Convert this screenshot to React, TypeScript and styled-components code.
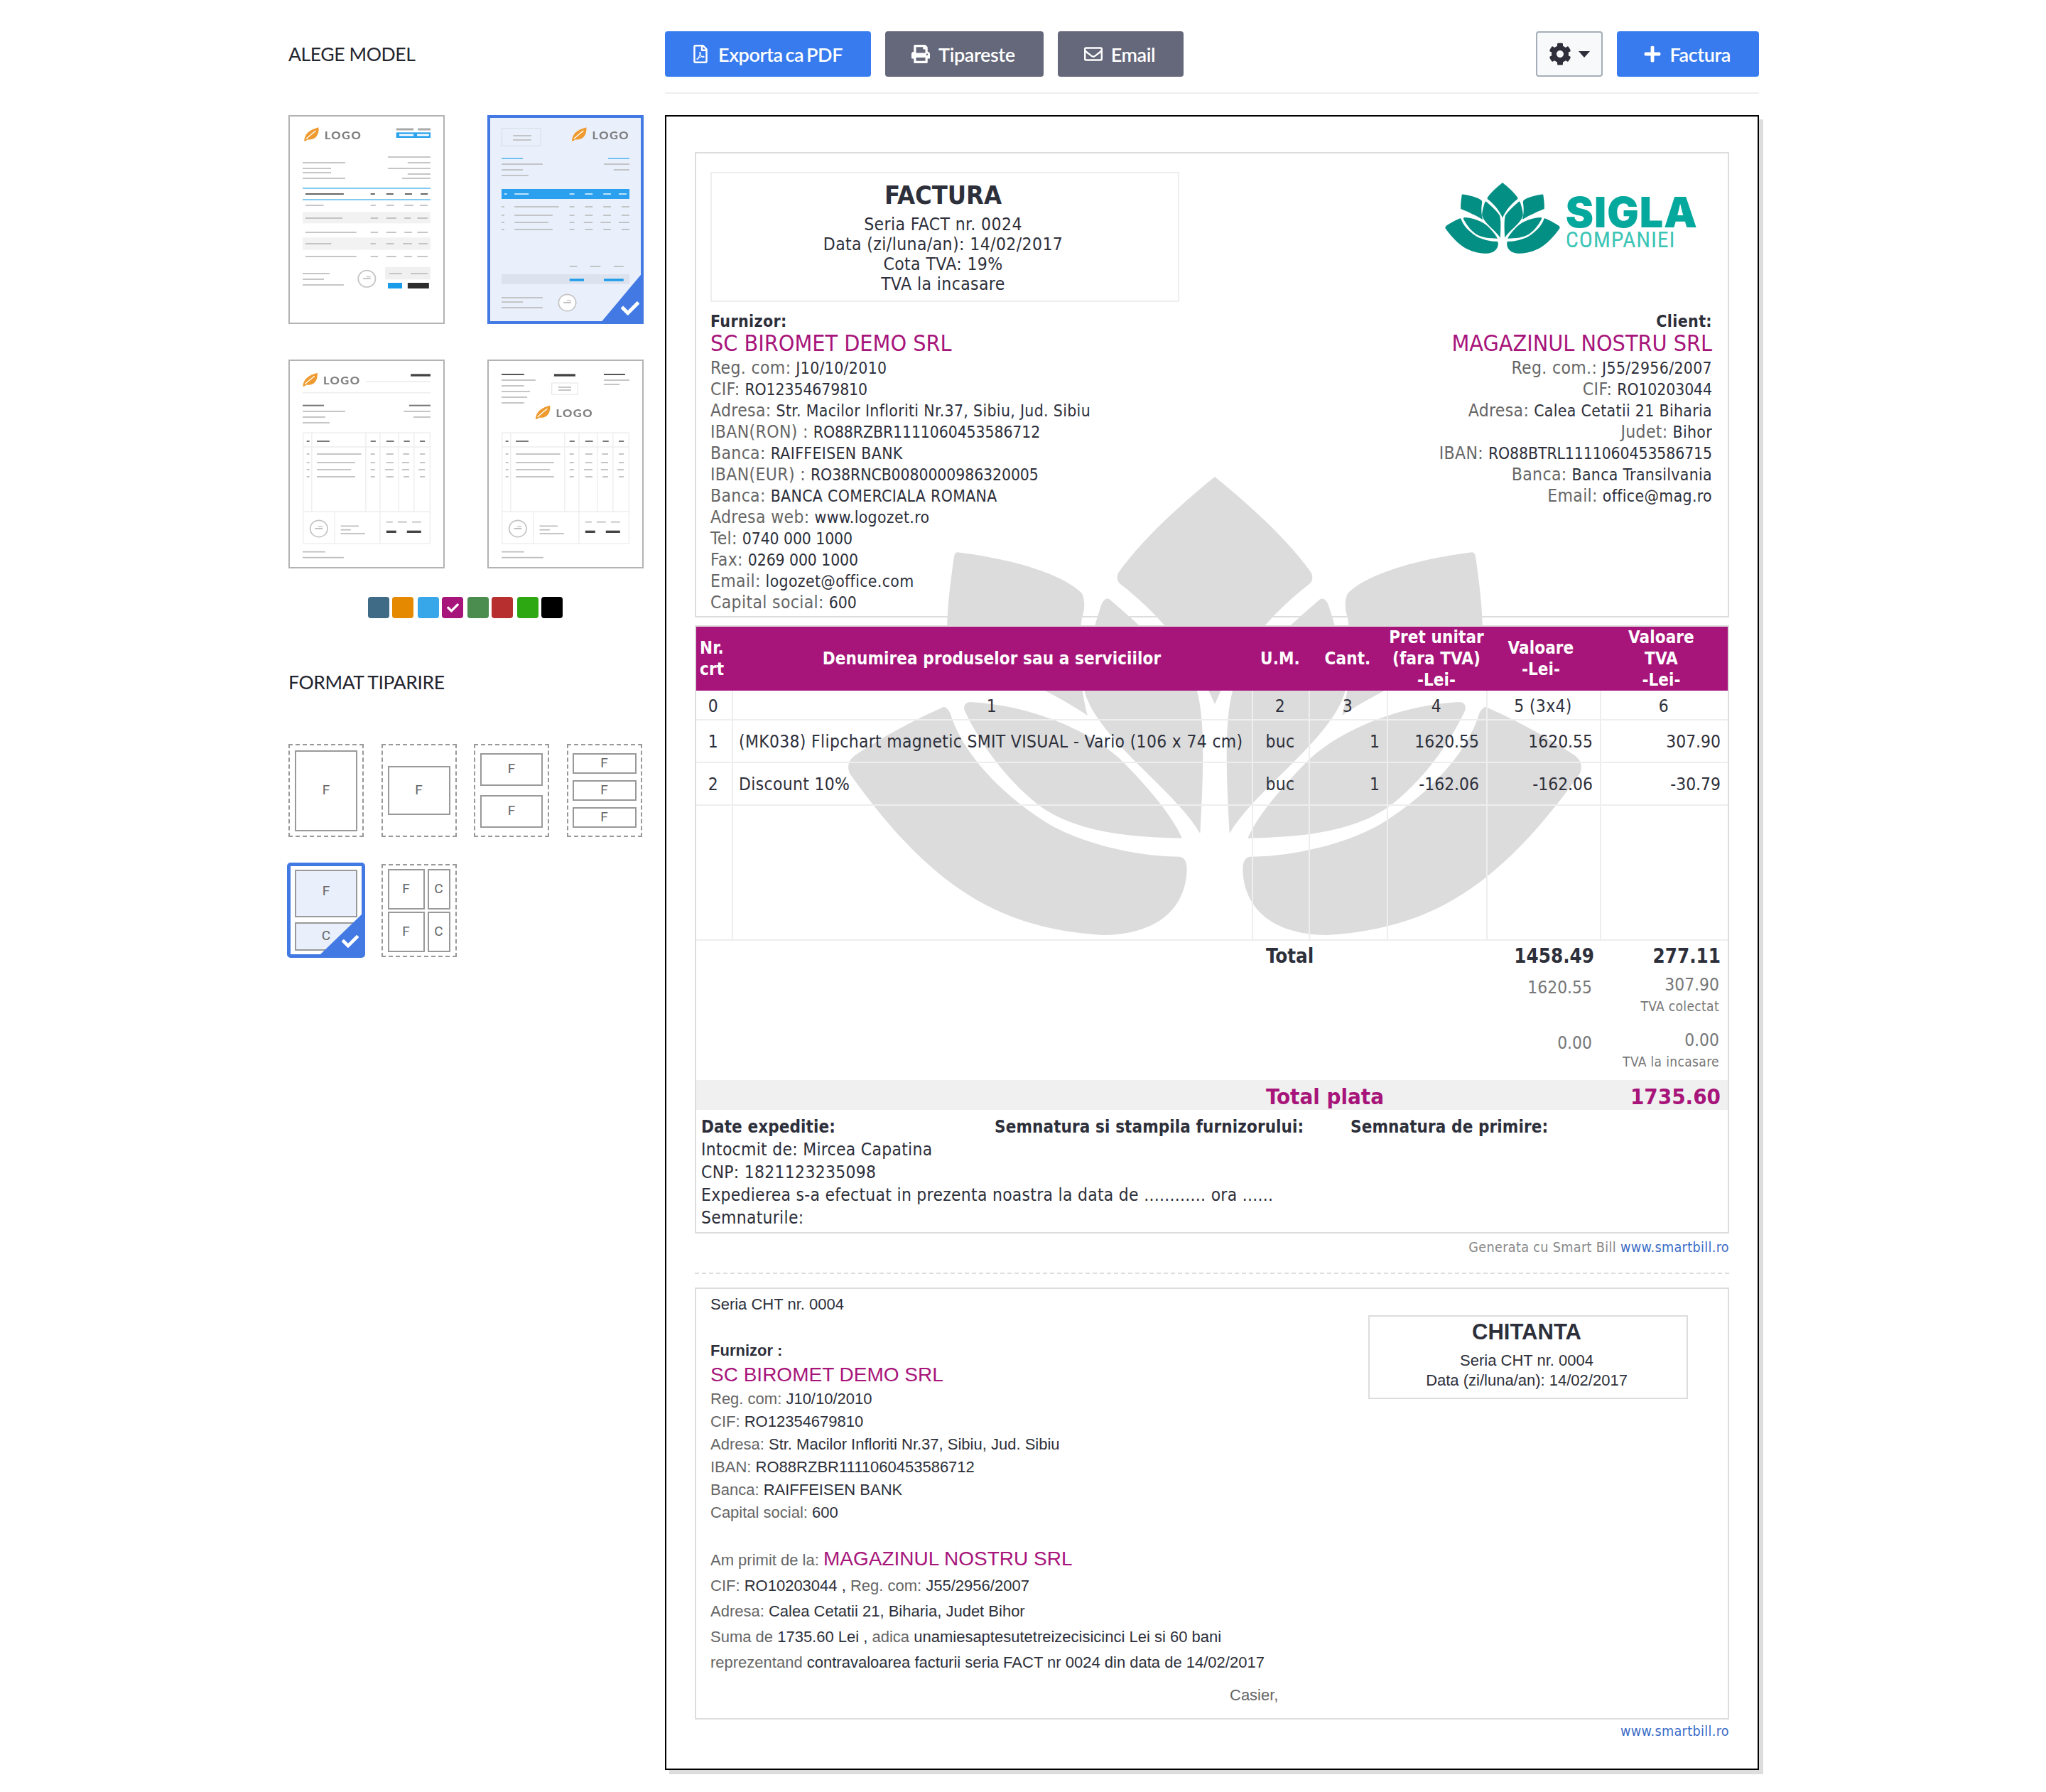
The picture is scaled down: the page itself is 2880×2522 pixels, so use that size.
import React from 'react';
import styled, { createGlobalStyle } from 'styled-components';
import { FaCheck, FaCog, FaPlus, FaPrint, FaRegEnvelope, FaRegFilePdf } from 'react-icons/fa';

const PURPLE = '#a7147a';
const INK = '#2d2f3a';

const GlobalStyle = createGlobalStyle`
  html, body { margin: 0; padding: 0; background: #fff; }
  * { box-sizing: border-box; }
`;

const Page = styled.div`
  width: 2880px;
  min-height: 2522px;
  padding: 44px 0 0 406px;
  display: flex;
  font-family: 'Lato', sans-serif;
  color: ${INK};
`;

const Sidebar = styled.aside`
  width: 530px;
  flex: none;
`;

const SideTitle = styled.h2<{ $gap?: number }>`
  margin: ${({ $gap }) => $gap ?? 0}px 0 0;
  height: 64px;
  line-height: 64px;
  font-size: 26.5px;
  font-weight: 400;
  letter-spacing: -0.4px;
  color: #23252f;
`;

const ThumbGrid = styled.div`
  margin-top: 54px;
  display: grid;
  grid-template-columns: 220px 220px;
  grid-auto-rows: 294px;
  column-gap: 60px;
  row-gap: 50px;
`;

const ThumbFrame = styled.div<{ $selected?: boolean }>`
  position: relative;
  overflow: hidden;
  background: ${({ $selected }) => ($selected ? '#e9f0fb' : '#fff')};
  &::after {
    content: '';
    position: absolute;
    inset: 0;
    border: ${({ $selected }) => ($selected ? '4px solid #4279e3' : '2px solid #b3b3b3')};
  }
`;

const ThumbSvg = styled.svg`
  display: block;
  width: 100%;
  height: 100%;
  filter: blur(0.45px);
`;

const ThumbCorner = styled.div`
  position: absolute;
  right: 0;
  bottom: 0;
  width: 62px;
  height: 74px;
  background: #4279e3;
  clip-path: polygon(100% 0, 100% 100%, 0 100%);
  svg {
    position: absolute;
    right: 6px;
    bottom: 9px;
    width: 26px;
    height: 26px;
    color: #fff;
  }
`;

const Swatches = styled.div`
  margin: 40px 0 0 112px;
  display: flex;
`;

const Swatch = styled.div<{ $color: string }>`
  width: 30px;
  height: 30px;
  margin-right: 4px;
  border-radius: 4px;
  background: ${({ $color }) => $color};
  display: flex;
  align-items: center;
  justify-content: center;
  color: #fff;
  &:nth-child(even) {
    margin-right: 6px;
  }
  svg {
    width: 17px;
    height: 17px;
  }
`;

const FormatGrid = styled.div`
  margin-top: 55px;
  display: grid;
  grid-template-columns: repeat(4, 106px);
  grid-auto-rows: 131px;
  column-gap: 24.5px;
  row-gap: 38px;
`;

const FormatTile = styled.div<{ $gap?: number; $selected?: boolean }>`
  position: relative;
  display: flex;
  flex-direction: column;
  align-items: center;
  justify-content: center;
  gap: ${({ $gap }) => $gap ?? 0}px;
  overflow: hidden;
  border: 2px dashed #999;
  ${({ $selected }) =>
    $selected &&
    `
    width: 110px;
    height: 134px;
    margin: -2px 0 0 -2px;
    border: 5px solid #4279e3;
    border-radius: 5px;
  `}
`;

const Sheet = styled.div<{ $w?: number; $h: number; $tint?: boolean; $lift?: number }>`
  width: ${({ $w }) => $w ?? 88}px;
  height: ${({ $h }) => $h}px;
  padding-bottom: ${({ $lift }) => $lift ?? 3}px;
  border: 2px solid #999;
  display: flex;
  align-items: center;
  justify-content: center;
  font-family: 'Roboto', sans-serif;
  font-size: 19px;
  color: #666;
  background: ${({ $tint }) => ($tint ? '#e9f0fb' : '#fff')};
`;

const SheetGrid = styled.div`
  display: grid;
  grid-template-columns: 52px 32px;
  grid-auto-rows: 57px;
  column-gap: 4px;
  row-gap: 3px;
`;

const TileCorner = styled.div`
  position: absolute;
  right: 0;
  bottom: 0;
  width: 58px;
  height: 56px;
  background: #4279e3;
  clip-path: polygon(100% 0, 100% 100%, 0 100%);
  svg {
    position: absolute;
    right: 4px;
    bottom: 6px;
    width: 24px;
    height: 24px;
    color: #fff;
  }
`;

const Main = styled.main`
  width: 1540px;
  flex: none;
`;

const Toolbar = styled.div`
  display: flex;
  gap: 20px;
  padding-bottom: 22px;
  border-bottom: 2px solid #eee;
`;

const ToolButton = styled.button<{ $variant: 'blue' | 'gray' }>`
  height: 64px;
  padding: 0 40px 0 37px;
  display: flex;
  align-items: center;
  gap: 12px;
  border: none;
  border-radius: 4px;
  background: ${({ $variant }) => ($variant === 'blue' ? '#377bee' : '#65677a')};
  color: #fff;
  font-family: 'Lato', sans-serif;
  font-size: 27px;
  font-weight: 600;
  letter-spacing: -0.4px;
  word-spacing: -2.5px;
  svg {
    flex: none;
    width: auto;
    height: 26px;
  }
`;

const SettingsButton = styled.button`
  margin-left: auto;
  width: 94px;
  height: 64px;
  display: flex;
  align-items: center;
  justify-content: center;
  gap: 10px;
  border: 2px solid #a6aeb8;
  border-radius: 4px;
  background: #f8f9fa;
  color: ${INK};
  svg {
    width: 32px;
    height: 32px;
  }
`;

const Caret = styled.span`
  width: 0;
  height: 0;
  border-left: 8px solid transparent;
  border-right: 8px solid transparent;
  border-top: 9px solid ${INK};
`;

const Paper = styled.div`
  position: relative;
  margin-top: 30px;
  padding: 50px 40px 38px;
  border: 2px solid #000;
  background: #fff;
  box-shadow: 6px 6px 0 #ddd;
  font-family: 'DejaVu Sans Condensed', 'DejaVu Sans', sans-serif;
  font-stretch: condensed;
  font-size: 24.4px;
  letter-spacing: 0.35px;
  color: ${INK};
`;

const Watermark = styled.svg`
  position: absolute;
  left: 255px;
  top: 507px;
  width: 1034px;
  height: 646px;
`;

const Layer = styled.div`
  position: relative;
`;

const PartiesBox = styled.section`
  border: 2px solid #ddd;
  height: 655px;
  padding: 26px 22px 0 20px;
  font-size: 23px;
`;

const HeadRow = styled.div`
  display: flex;
  justify-content: space-between;
`;

const TitleBox = styled.div`
  width: 660px;
  height: 183px;
  padding: 11px 5px 0 0;
  border: 2px solid #eee;
  text-align: center;
  font-size: 24.5px;
  letter-spacing: 0.4px;
  line-height: 28px;
`;

const TitleHeading = styled.div`
  height: 47px;
  line-height: 40px;
  font-size: 36px;
  font-weight: 700;
  letter-spacing: 0;
`;

const Brand = styled.div`
  margin: 15px 20px 0 0;
  display: flex;
  gap: 8px;
`;

const BrandLotus = styled.svg`
  width: 162px;
  height: 100px;
`;

const BrandName = styled.div`
  margin-top: 17px;
  height: 50px;
  line-height: 50px;
  font-family: 'Inter', sans-serif;
  font-size: 59px;
  font-weight: 900;
  letter-spacing: 1px;
  color: #04a89c;
`;

const BrandSub = styled.div`
  line-height: 26px;
  font-family: 'Roboto', sans-serif;
  font-size: 32px;
  letter-spacing: 0.8px;
  color: #3dc5b5;
`;

const Parties = styled.div`
  margin-top: 12px;
  display: flex;
  justify-content: space-between;
`;

const Party = styled.div<{ $right?: boolean }>`
  text-align: ${({ $right }) => ($right ? 'right' : 'left')};
`;

const PartyLabel = styled.div`
  line-height: 30px;
  font-weight: 700;
`;

const CompanyName = styled.div`
  height: 36px;
  line-height: 32px;
  font-size: 32px;
  letter-spacing: 0;
  color: ${PURPLE};
`;

const InfoLine = styled.div`
  line-height: 30px;
  white-space: nowrap;
`;

const Muted = styled.span`
  color: #666;
`;

const InfoKey = styled(Muted)`
  font-size: 24.5px;
`;

const InfoValue = styled.span<{ $tight: boolean }>`
  font-size: 22.8px;
  letter-spacing: ${({ $tight }) => ($tight ? '-0.1px' : '0.35px')};
`;

const InvoiceBody = styled.section`
  margin-top: 11px;
  border: 2px solid #ddd;
  height: 856px;
`;

const ItemsTable = styled.table`
  width: 1452px;
  table-layout: fixed;
  border-collapse: separate;
  border-spacing: 0;
  tbody tr:first-child td {
    padding-top: 4px;
  }
`;

const Th = styled.th<{ $left?: boolean; $nudge?: number }>`
  height: 90px;
  padding: ${({ $left, $nudge }) => ($left ? '0 5px' : `0 ${$nudge ?? 4}px 0 0`)};
  background: ${PURPLE};
  color: #fff;
  font-size: 24px;
  font-weight: 700;
  letter-spacing: 0.1px;
  line-height: 30px;
  text-align: ${({ $left }) => ($left ? 'left' : 'center')};
`;

const Td = styled.td<{ $align?: 'left' | 'right' | 'center'; $h: number }>`
  height: ${({ $h }) => $h}px;
  padding: 2px 10px 0 8px;
  border-right: 2px solid #eee;
  border-bottom: 2px solid #eee;
  text-align: ${({ $align }) => $align ?? 'center'};
  letter-spacing: ${({ $align }) => ($align === 'right' ? '0' : 'inherit')};
  white-space: nowrap;
  line-height: 30px;
  &:last-child {
    border-right: none;
  }
`;

const SummaryRow = styled.div<{ $h: number; $band?: boolean }>`
  height: ${({ $h }) => $h}px;
  display: grid;
  grid-template-columns: 784px 330px 160px 178px;
  background: ${({ $band }) => ($band ? '#f0f0f0' : 'transparent')};
`;

const SummaryLabel = styled.div<{ $big?: boolean }>`
  grid-column: 2;
  padding-left: 18px;
  font-weight: 700;
  font-size: ${({ $big }) => ($big ? 31 : 27.5)}px;
  line-height: ${({ $big }) => ($big ? 46 : 42)}px;
  letter-spacing: 0;
  color: ${({ $big }) => ($big ? PURPLE : INK)};
`;

const SummaryValue = styled.div<{ $big?: boolean }>`
  padding-right: 10px;
  text-align: right;
  font-weight: 700;
  font-size: ${({ $big }) => ($big ? 31 : 27.5)}px;
  line-height: ${({ $big }) => ($big ? 46 : 42)}px;
  letter-spacing: 0;
  color: ${({ $big }) => ($big ? PURPLE : INK)};
`;

const TaxBase = styled.div`
  grid-column: 3;
  padding: 8px 13px 0 0;
  text-align: right;
  line-height: 32px;
  letter-spacing: 0;
  color: #777;
`;

const TaxValue = styled.div`
  padding: 4px 12px 0 0;
  text-align: right;
  line-height: 32px;
  letter-spacing: 0;
  color: #777;
`;

const TaxNote = styled.div`
  line-height: 28px;
  font-size: 19px;
  letter-spacing: 0.35px;
  color: #777;
`;

const Shipping = styled.div`
  padding: 8px 7px 0;
  line-height: 32px;
  letter-spacing: 0.3px;
`;

const ShippingHeads = styled.div`
  display: grid;
  grid-template-columns: 413px 501px auto;
  font-size: 24px;
  font-weight: 700;
  letter-spacing: 0.1px;
`;

const SmallNote = styled.div<{ $top: number }>`
  margin-top: ${({ $top }) => $top}px;
  text-align: right;
  font-size: 19.6px;
  line-height: 28px;
  color: #888;
  a {
    color: #3b6dc7;
    text-decoration: none;
  }
`;

const CutLine = styled.div`
  margin-top: 21px;
  border-top: 2px dashed #ddd;
`;

const ReceiptBox = styled.section`
  position: relative;
  margin-top: 19px;
  height: 608px;
  padding: 6px 56px 0 20px;
  border: 2px solid #ddd;
  font-family: 'Liberation Sans', Arial, sans-serif;
  font-size: 22px;
  letter-spacing: 0;
`;

const ReceiptHead = styled.div`
  display: flex;
  justify-content: space-between;
`;

const ReceiptLine = styled.div<{ $h?: number }>`
  line-height: ${({ $h }) => $h ?? 32}px;
  white-space: nowrap;
`;

const ReceiptBold = styled.div`
  margin-top: 33px;
  line-height: 32px;
  font-weight: 700;
`;

const ReceiptName = styled.div`
  height: 36px;
  line-height: 35px;
  font-size: 28px;
  color: ${PURPLE};
`;

const ReceiptInline = styled.span`
  font-size: 28px;
  color: ${PURPLE};
`;

const ReceiptTitleBox = styled.div`
  width: 450px;
  height: 118px;
  margin-top: 31px;
  padding: 2px 4px 0 0;
  border: 2px solid #ddd;
  text-align: center;
  line-height: 28px;
`;

const ReceiptHeading = styled.div`
  height: 46px;
  line-height: 40px;
  font-size: 31px;
  font-weight: 700;
`;

const ReceiptFrom = styled.div`
  margin-top: 30px;
  height: 39px;
  line-height: 38px;
  white-space: nowrap;
`;

const Cashier = styled.div`
  margin: 12px 0 0 731px;
  line-height: 32px;
  color: #666;
`;

type Bar = [number, number, number];

const Bars = ({ items, color = '#bbb', h = 5 }: { items: Bar[]; color?: string; h?: number }) => (
  <>
    {items.map(([a, b, y], i) => (
      <rect key={i} x={a} y={y - h / 2} width={b - a} height={h} fill={color} />
    ))}
  </>
);

const row = (y: number, ...xs: number[]): Bar[] => {
  const out: Bar[] = [];
  for (let i = 0; i < xs.length; i += 2) out.push([xs[i], xs[i + 1], y]);
  return out;
};

const LogoMark = ({ x, y }: { x: number; y: number }) => (
  <g transform={`translate(${x} ${y})`}>
    <path d="M0 57 C2 28 20 10 57 0 C60 30 45 56 14 51 L4 58 Z" fill="#ef9a2e" />
    <path d="M8 48 C20 36 32 26 46 14" stroke="#fff" strokeWidth="4" fill="none" />
    <text x="80" y="49" fontFamily="Lato, sans-serif" fontWeight="900" fontSize="46" fill="#808080" textLength={143}>
      LOGO
    </text>
  </g>
);

const Stamp = ({ cx, cy }: { cx: number; cy: number }) => (
  <g>
    <ellipse cx={cx} cy={cy} rx="34" ry="35" fill="#fff" stroke="#c4c4c4" strokeWidth="5" />
    <rect x={cx - 15} y={cy - 3} width="30" height="5" fill="#bbb" />
    <rect x={cx - 2} y={cy - 11} width="17" height="5" fill="#ccc" />
  </g>
);

// the table drawn on the two bordered models; the second one just shifts it right
const GridTable = () => (
  <g>
    <g fill="none" stroke="#eee" strokeWidth="4">
      <rect x="131" y="387" width="500" height="468" />
      <path d="M131 447H631M131 720H631M165 387V720M378 387V720M434 387V855M507 387V720M568 387V720M255 720V855" />
    </g>
    <Bars h={6} color="#777" items={row(423, 145, 156, 185, 235, 397, 417, 459, 489, 528, 551, 591, 611)} />
    <Bars
      items={[
        ...row(477, 145, 156, 185, 360, 397, 414, 459, 487, 525, 549, 591, 611),
        ...row(513, 145, 156, 185, 336, 397, 414, 459, 487, 521, 549, 591, 611),
        ...row(543, 145, 156, 185, 320, 397, 414, 454, 487, 521, 549, 586, 611),
        ...row(573, 145, 156, 185, 336, 397, 414, 459, 487, 527, 549, 591, 611),
        ...row(764, 459, 484, 504, 540, 560, 596),
        ...row(781, 279, 350),
        ...row(797, 279, 319),
        ...row(813, 279, 375),
      ]}
    />
    <Bars h={10} color="#444" items={row(805, 459, 498, 540, 596)} />
    <Stamp cx={193} cy={792} />
  </g>
);

const ModelOne = () => (
  <ThumbSvg viewBox="73 426 616 882" preserveAspectRatio="none">
    <LogoMark x={135} y={478} />
    <Bars h={9} color="#aaa" items={row(486, 498, 566, 583, 633)} />
    <rect x="498" y="499" width="135" height="23" fill="#2ba3ee" />
    <Bars h={8} color="#fff" items={row(510, 510, 566, 580, 627)} />
    <rect x="129" y="835" width="504" height="48" fill="#f2f2f2" />
    <rect x="129" y="943" width="504" height="52" fill="#f2f2f2" />
    <rect x="454" y="1068" width="179" height="52" fill="#f0f0f0" />
    <Bars
      items={[
        ...row(603, 465, 633),
        ...row(627, 129, 297, 543, 633),
        ...row(651, 129, 241, 465, 633),
        ...row(669, 129, 241),
        ...row(675, 543, 633),
        ...row(693, 129, 297, 521, 633),
        ...row(807, 140, 212, 397, 417, 459, 489, 530, 566, 591, 622),
        ...row(861, 140, 286, 397, 426, 459, 498, 530, 555, 581, 622),
        ...row(921, 140, 341, 397, 426, 459, 498, 530, 560, 581, 622),
        ...row(969, 140, 242, 397, 417, 459, 489, 524, 560, 586, 622),
        ...row(1023, 140, 341, 397, 426, 459, 498, 530, 560, 581, 622),
        ...row(1095, 129, 235, 470, 520, 555, 622),
        ...row(1119, 129, 213),
        ...row(1143, 129, 291),
      ]}
    />
    <Bars color="#6bbff0" items={[...row(735, 129, 633), ...row(783, 129, 633)]} />
    <Bars h={6} color="#666" items={row(759, 140, 291, 397, 414, 459, 487, 532, 560, 594, 622)} />
    <Stamp cx={382} cy={1117} />
    <rect x="465" y="1134" width="56" height="24" fill="#1a9cea" />
    <rect x="543" y="1134" width="84" height="24" fill="#2e2e2e" />
  </ThumbSvg>
);

const ModelTwo = () => (
  <ThumbSvg viewBox="857 426 616 882" preserveAspectRatio="none">
    <rect x="914" y="482" width="154" height="74" fill="none" stroke="#d9dee8" strokeWidth="3" />
    <LogoMark x={1190} y={478} />
    <Bars color="#5bb8ee" items={row(609, 913, 997, 1333, 1417)} />
    <rect x="913" y="738" width="504" height="42" fill="#2ba0ee" />
    <Bars color="#bfe3fa" h={6} items={row(759, 924, 934, 964, 1020, 1181, 1200, 1242, 1272, 1314, 1344, 1375, 1406)} />
    <rect x="913" y="1098" width="504" height="42" fill="#dde3ee" />
    <Bars h={10} color="#1a9cea" items={row(1122, 1181, 1238, 1316, 1394)} />
    <Bars
      items={[
        ...row(513, 958, 1030),
        ...row(531, 958, 1030),
        ...row(633, 913, 1075, 1316, 1417),
        ...row(657, 913, 997, 1355, 1417),
        ...row(681, 913, 1019),
        ...row(813, 913, 924, 964, 1139, 1181, 1200, 1242, 1272, 1314, 1344, 1386, 1417),
        ...row(849, 913, 924, 964, 1114, 1181, 1200, 1242, 1272, 1314, 1344, 1386, 1417),
        ...row(879, 913, 924, 964, 1098, 1181, 1200, 1237, 1272, 1303, 1344, 1375, 1417),
        ...row(909, 913, 924, 964, 1114, 1181, 1200, 1242, 1272, 1314, 1344, 1386, 1417),
        ...row(1065, 1181, 1211, 1262, 1303, 1355, 1394),
        ...row(1197, 913, 1075),
        ...row(1215, 913, 997),
        ...row(1239, 913, 1075),
      ]}
    />
    <Stamp cx={1172} cy={1218} />
  </ThumbSvg>
);

const ModelThree = () => (
  <ThumbSvg viewBox="73 78 616 882" preserveAspectRatio="none">
    <LogoMark x={130} y={134} />
    <Bars h={10} color="#444" items={row(144, 555, 633)} />
    <Bars color="#eee" items={[...row(171, 378, 633), ...row(218, 129, 633)]} />
    <Bars h={6} color="#777" items={row(272, 129, 213, 549, 633)} />
    <Bars
      items={[
        ...row(297, 129, 297, 527, 633),
        ...row(321, 129, 218, 566, 633),
        ...row(345, 129, 235),
        ...row(890, 129, 218),
        ...row(914, 129, 291),
      ]}
    />
    <GridTable />
  </ThumbSvg>
);

const ModelFour = () => (
  <ThumbSvg viewBox="857 78 616 882" preserveAspectRatio="none">
    <Bars h={6} color="#555" items={row(141, 913, 1002, 1316, 1400)} />
    <Bars h={10} color="#444" items={row(144, 1120, 1204)} />
    <rect x="1111" y="177" width="102" height="48" fill="none" stroke="#e4e4e4" strokeWidth="3" />
    <Bars
      items={[
        ...row(165, 913, 1047, 1316, 1417),
        ...row(189, 913, 1002),
        ...row(183, 1316, 1378),
        ...row(195, 1137, 1187),
        ...row(207, 1137, 1187),
        ...row(213, 913, 1025),
        ...row(237, 913, 1014),
        ...row(261, 913, 1002),
        ...row(890, 913, 1002),
        ...row(914, 913, 1078),
      ]}
    />
    <LogoMark x={1047} y={272} />
    <g transform="translate(784 0)">
      <GridTable />
    </g>
  </ThumbSvg>
);

// lotus used for the logo and for the big watermark, drawn as one half and mirrored
const LotusHalf = () => (
  <>
    <path d="M0 0 C-50 40 -105 90 -138 136 Q-142 146 -135 152 C-85 190 -30 250 0 322 Z" />
    <path d="M-151 173 C-125 195 -60 250 -26 301 C-15 340 -15 400 -21 505 C-60 440 -170 370 -187 301 C-190 280 -175 220 -165 190 Q-160 170 -151 173 Z" />
    <path d="M-368 107 C-300 115 -220 135 -190 165 Q-183 180 -190 200 C-197 250 -192 300 -182 338 C-220 312 -300 272 -382 240 C-385 200 -378 150 -373 115 Q-372 107 -368 107 Z" />
    <path d="M-350 319 C-280 322 -190 350 -135 400 C-100 435 -60 480 -47 512 C-120 510 -190 505 -245 470 C-300 430 -340 370 -358 330 Q-360 320 -350 319 Z" />
    <path d="M-392 328 Q-385 322 -378 335 C-365 380 -320 440 -240 490 C-190 520 -110 538 -50 538 Q-40 540 -40 555 C-40 600 -70 648 -160 649 C-300 640 -400 590 -522 420 Q-528 405 -515 395 C-470 365 -420 340 -392 328 Z" />
  </>
);

const Lotus = () => (
  <>
    <LotusHalf />
    <g transform="scale(-1 1)">
      <LotusHalf />
    </g>
  </>
);

const supplierLines: [string, string][] = [
  ['Reg. com:', 'J10/10/2010'],
  ['CIF:', 'RO12354679810'],
  ['Adresa:', 'Str. Macilor Infloriti Nr.37, Sibiu, Jud. Sibiu'],
  ['IBAN(RON) :', 'RO88RZBR1111060453586712'],
  ['Banca:', 'RAIFFEISEN BANK'],
  ['IBAN(EUR) :', 'RO38RNCB0080000986320005'],
  ['Banca:', 'BANCA COMERCIALA ROMANA'],
  ['Adresa web:', 'www.logozet.ro'],
  ['Tel:', '0740 000 1000'],
  ['Fax:', '0269 000 1000'],
  ['Email:', 'logozet@office.com'],
  ['Capital social:', '600'],
];

const clientLines: [string, string][] = [
  ['Reg. com.:', 'J55/2956/2007'],
  ['CIF:', 'RO10203044'],
  ['Adresa:', 'Calea Cetatii 21 Biharia'],
  ['Judet:', 'Bihor'],
  ['IBAN:', 'RO88BTRL1111060453586715'],
  ['Banca:', 'Banca Transilvania'],
  ['Email:', 'office@mag.ro'],
];

const receiptLines: [string, string][] = [
  ['Reg. com:', 'J10/10/2010'],
  ['CIF:', 'RO12354679810'],
  ['Adresa:', 'Str. Macilor Infloriti Nr.37, Sibiu, Jud. Sibiu'],
  ['IBAN:', 'RO88RZBR1111060453586712'],
  ['Banca:', 'RAIFFEISEN BANK'],
  ['Capital social:', '600'],
];

const swatches = ['#3f6b87', '#e58a00', '#37a7ea', PURPLE, '#4b8c4f', '#b82f2f', '#2ea812', '#000'];

const colWidths = [52, 732, 80, 110, 140, 160, 178];

// numbers and account codes sit tighter than the rest of the invoice text
const isCode = (value: string) => /^(RO|\d)/.test(value);

const PartyLines = ({ lines }: { lines: [string, string][] }) => (
  <>
    {lines.map(([label, value]) => (
      <InfoLine key={label + value}>
        <InfoKey>{label}</InfoKey> <InfoValue $tight={isCode(value)}>{value}</InfoValue>
      </InfoLine>
    ))}
  </>
);

const App = () => (
  <Page>
    <GlobalStyle />
    <Sidebar>
      <SideTitle>ALEGE MODEL</SideTitle>
      <ThumbGrid>
        <ThumbFrame>
          <ModelOne />
        </ThumbFrame>
        <ThumbFrame $selected>
          <ModelTwo />
          <ThumbCorner>
            <FaCheck />
          </ThumbCorner>
        </ThumbFrame>
        <ThumbFrame>
          <ModelThree />
        </ThumbFrame>
        <ThumbFrame>
          <ModelFour />
        </ThumbFrame>
      </ThumbGrid>
      <Swatches>
        {swatches.map(color => (
          <Swatch key={color} $color={color}>
            {color === PURPLE && <FaCheck />}
          </Swatch>
        ))}
      </Swatches>
      <SideTitle $gap={58}>FORMAT TIPARIRE</SideTitle>
      <FormatGrid>
        <FormatTile>
          <Sheet $h={114}>F</Sheet>
        </FormatTile>
        <FormatTile>
          <Sheet $h={69}>F</Sheet>
        </FormatTile>
        <FormatTile $gap={13}>
          <Sheet $h={46}>F</Sheet>
          <Sheet $h={46}>F</Sheet>
        </FormatTile>
        <FormatTile $gap={9}>
          <Sheet $w={90} $h={29}>F</Sheet>
          <Sheet $w={90} $h={29}>F</Sheet>
          <Sheet $w={90} $h={29}>F</Sheet>
        </FormatTile>
        <FormatTile $selected $gap={7}>
          <Sheet $h={67} $tint $lift={8}>F</Sheet>
          <Sheet $h={40} $tint>C</Sheet>
          <TileCorner>
            <FaCheck />
          </TileCorner>
        </FormatTile>
        <FormatTile>
          <SheetGrid>
            <Sheet $w={52} $h={57}>F</Sheet>
            <Sheet $w={32} $h={57}>C</Sheet>
            <Sheet $w={52} $h={57}>F</Sheet>
            <Sheet $w={32} $h={57}>C</Sheet>
          </SheetGrid>
        </FormatTile>
      </FormatGrid>
    </Sidebar>

    <Main>
      <Toolbar>
        <ToolButton $variant="blue">
          <FaRegFilePdf />
          Exporta ca PDF
        </ToolButton>
        <ToolButton $variant="gray">
          <FaPrint />
          Tipareste
        </ToolButton>
        <ToolButton $variant="gray">
          <FaRegEnvelope />
          Email
        </ToolButton>
        <SettingsButton>
          <FaCog />
          <Caret />
        </SettingsButton>
        <ToolButton $variant="blue">
          <FaPlus />
          Factura
        </ToolButton>
      </Toolbar>

      <Paper>
        <Watermark viewBox="-525 0 1050 650" fill="#dcdcdc" preserveAspectRatio="none">
          <Lotus />
        </Watermark>
        <Layer>
          <PartiesBox>
            <HeadRow>
              <TitleBox>
                <TitleHeading>FACTURA</TitleHeading>
                <div>Seria FACT nr. 0024</div>
                <div>Data (zi/luna/an): 14/02/2017</div>
                <div>Cota TVA: 19%</div>
                <div>TVA la incasare</div>
              </TitleBox>
              <Brand>
                <BrandLotus viewBox="-525 0 1050 650" fill="#048f84">
                  <Lotus />
                </BrandLotus>
                <div>
                  <BrandName>SIGLA</BrandName>
                  <BrandSub>COMPANIEI</BrandSub>
                </div>
              </Brand>
            </HeadRow>
            <Parties>
              <Party>
                <PartyLabel>Furnizor:</PartyLabel>
                <CompanyName>SC BIROMET DEMO SRL</CompanyName>
                <PartyLines lines={supplierLines} />
              </Party>
              <Party $right>
                <PartyLabel>Client:</PartyLabel>
                <CompanyName>MAGAZINUL NOSTRU SRL</CompanyName>
                <PartyLines lines={clientLines} />
              </Party>
            </Parties>
          </PartiesBox>

          <InvoiceBody>
            <ItemsTable>
              <colgroup>
                {colWidths.map((w, i) => (
                  <col key={i} width={w} />
                ))}
              </colgroup>
              <thead>
                <tr>
                  <Th $left>
                    Nr.
                    <br />
                    crt
                  </Th>
                  <Th>Denumirea produselor sau a serviciilor</Th>
                  <Th>U.M.</Th>
                  <Th>Cant.</Th>
                  <Th>
                    Pret unitar
                    <br />
                    (fara TVA)
                    <br />
                    -Lei-
                  </Th>
                  <Th $nudge={10}>
                    Valoare
                    <br />
                    -Lei-
                  </Th>
                  <Th $nudge={9}>
                    Valoare
                    <br />
                    TVA
                    <br />
                    -Lei-
                  </Th>
                </tr>
              </thead>
              <tbody>
                <tr>
                  {['0', '1', '2', '3', '4', '5 (3x4)', '6'].map(n => (
                    <Td key={n} $h={42}>
                      {n}
                    </Td>
                  ))}
                </tr>
                <tr>
                  <Td $h={60}>1</Td>
                  <Td $h={60} $align="left">
                    (MK038) Flipchart magnetic SMIT VISUAL - Vario (106 x 74 cm)
                  </Td>
                  <Td $h={60}>buc</Td>
                  <Td $h={60} $align="right">1</Td>
                  <Td $h={60} $align="right">1620.55</Td>
                  <Td $h={60} $align="right">1620.55</Td>
                  <Td $h={60} $align="right">307.90</Td>
                </tr>
                <tr>
                  <Td $h={60}>2</Td>
                  <Td $h={60} $align="left">
                    Discount 10%
                  </Td>
                  <Td $h={60}>buc</Td>
                  <Td $h={60} $align="right">1</Td>
                  <Td $h={60} $align="right">-162.06</Td>
                  <Td $h={60} $align="right">-162.06</Td>
                  <Td $h={60} $align="right">-30.79</Td>
                </tr>
                <tr>
                  {colWidths.map((_, i) => (
                    <Td key={i} $h={190} />
                  ))}
                </tr>
              </tbody>
            </ItemsTable>

            <SummaryRow $h={42}>
              <SummaryLabel>Total</SummaryLabel>
              <SummaryValue>1458.49</SummaryValue>
              <SummaryValue>277.11</SummaryValue>
            </SummaryRow>
            <SummaryRow $h={78}>
              <TaxBase>1620.55</TaxBase>
              <TaxValue>
                307.90
                <TaxNote>TVA colectat</TaxNote>
              </TaxValue>
            </SummaryRow>
            <SummaryRow $h={76}>
              <TaxBase>0.00</TaxBase>
              <TaxValue>
                0.00
                <TaxNote>TVA la incasare</TaxNote>
              </TaxValue>
            </SummaryRow>
            <SummaryRow $h={42} $band>
              <SummaryLabel $big>Total plata</SummaryLabel>
              <SummaryValue $big />
              <SummaryValue $big>1735.60</SummaryValue>
            </SummaryRow>

            <Shipping>
              <ShippingHeads>
                <span>Date expeditie:</span>
                <span>Semnatura si stampila furnizorului:</span>
                <span>Semnatura de primire:</span>
              </ShippingHeads>
              <div>Intocmit de: Mircea Capatina</div>
              <div>CNP: 1821123235098</div>
              <div>Expedierea s-a efectuat in prezenta noastra la data de ............ ora ......</div>
              <div>Semnaturile:</div>
            </Shipping>
          </InvoiceBody>

          <SmallNote $top={6}>
            Generata cu Smart Bill <a href="#smartbill">www.smartbill.ro</a>
          </SmallNote>
          <CutLine />

          <ReceiptBox>
            <ReceiptHead>
              <div>
                <ReceiptLine>Seria CHT nr. 0004</ReceiptLine>
                <ReceiptBold>Furnizor :</ReceiptBold>
                <ReceiptName>SC BIROMET DEMO SRL</ReceiptName>
                {receiptLines.map(([label, value]) => (
                  <ReceiptLine key={label}>
                    <Muted>{label}</Muted> {value}
                  </ReceiptLine>
                ))}
              </div>
              <ReceiptTitleBox>
                <ReceiptHeading>CHITANTA</ReceiptHeading>
                <div>Seria CHT nr. 0004</div>
                <div>Data (zi/luna/an): 14/02/2017</div>
              </ReceiptTitleBox>
            </ReceiptHead>
            <ReceiptFrom>
              <Muted>Am primit de la:</Muted> <ReceiptInline>MAGAZINUL NOSTRU SRL</ReceiptInline>
            </ReceiptFrom>
            <ReceiptLine $h={36}>
              <Muted>CIF:</Muted> RO10203044 , <Muted>Reg. com:</Muted> J55/2956/2007
            </ReceiptLine>
            <ReceiptLine $h={36}>
              <Muted>Adresa:</Muted> Calea Cetatii 21, Biharia, Judet Bihor
            </ReceiptLine>
            <ReceiptLine $h={36}>
              <Muted>Suma de</Muted> 1735.60 Lei , <Muted>adica</Muted> unamiesaptesutetreizecisicinci Lei si 60 bani
            </ReceiptLine>
            <ReceiptLine $h={36}>
              <Muted>reprezentand</Muted> contravaloarea facturii seria FACT nr 0024 din data de 14/02/2017
            </ReceiptLine>
            <Cashier>Casier,</Cashier>
          </ReceiptBox>
          <SmallNote $top={3}>
            <a href="#smartbill">www.smartbill.ro</a>
          </SmallNote>
        </Layer>
      </Paper>
    </Main>
  </Page>
);

export default App;
